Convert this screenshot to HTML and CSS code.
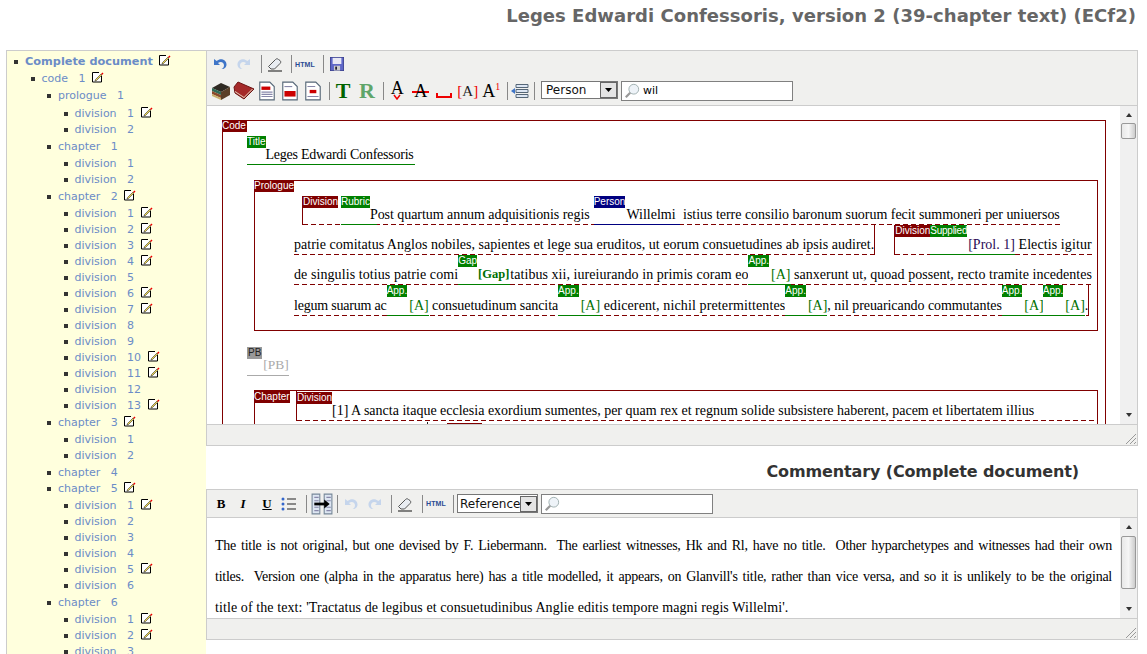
FILE: index.html
```html
<!DOCTYPE html>
<html lang="en">
<head>
<meta charset="utf-8">
<title>Leges Edwardi Confessoris</title>
<link rel="stylesheet" href="styles.css">
</head>
<body>
<svg class="defs" width="0" height="0" aria-hidden="true">
  <symbol id="edit" viewBox="0 0 12 12"><path d="M9.500 5v6H.5V1.500H7" fill="#fff" stroke="#000"/><path d="M3.500 8.500L9 3l1 1-5.500 5.500-1.500.5z" fill="#f0d850" stroke="#333" stroke-width=".6"/><path d="M9 3l1.500-1.500 1 1L10 4z" fill="#e00"/></symbol>
  <symbol id="undo" viewBox="0 0 16 16"><path d="M2 3v6h6L6 7c3-2 6-.5 6 2.500 0 1.500-1 3-2.500 3.500 3.500.5 5-2.500 5-4.500C14.500 4 9 1.500 4.700 5z" fill="#3f75c8"/></symbol>
  <symbol id="redo" viewBox="0 0 16 16"><path d="M14 3v6H8l2-2C7 5 4 6.500 4 9.500 4 11 5 12.500 6.500 13 3 13.500 1.500 10.500 1.500 8.500 1.500 4 7 1.500 11.300 5z" fill="#c5d5ec"/></symbol>
  <symbol id="undo-off" viewBox="0 0 16 16"><path d="M2 3v6h6L6 7c3-2 6-.5 6 2.500 0 1.500-1 3-2.500 3.500 3.500.5 5-2.500 5-4.500C14.500 4 9 1.500 4.700 5z" fill="#c5d5ec"/></symbol>
  <symbol id="eraser" viewBox="0 0 16 16"><path d="M1.500 10.500l7-7c1-1 2-1 3 0l1.500 1c1 1 1 2 0 3l-5.500 5.500H4z" fill="#e9edf2" stroke="#555"/><path d="M1 15h14" stroke="#111"/></symbol>
  <symbol id="save" viewBox="0 0 16 16"><rect x=".5" y=".5" width="15" height="15" fill="#5f67c8" stroke="#3a3f90"/><rect x="3" y="1" width="10" height="7" fill="#e8e8f4"/><rect x="4.500" y="10" width="7" height="5.500" fill="#ccc"/><rect x="6" y="11" width="2" height="3.500" fill="#223"/></symbol>
  <symbol id="books" viewBox="0 0 20 20"><path d="M1 7l9-5 9 4-9 5z" fill="#2f2a22"/><path d="M1 7l9 4v3L1 10z" fill="#2f6b55"/><path d="M1 10l9 4v3l-9-4z" fill="#8a4a2a"/><path d="M1 13l9 4v2l-9-4z" fill="#c9b06a"/><path d="M10 11l9-5v8l-9 5z" fill="#5b4028"/></symbol>
  <symbol id="book" viewBox="0 0 22 20"><path d="M1 6l4-5 16 7-10 10-9-6z" fill="#a52a2a" stroke="#6c1414"/><path d="M2 11l9 6 9-9-1 0-8 8-9-6z" fill="#e8d8c0"/></symbol>
  <symbol id="doc1" viewBox="0 0 16 18"><path d="M1.500 1h9l4 4v12h-13z" fill="#fff" stroke="#567"/><rect x="3" y="5" width="8" height="3" fill="#c00"/><path d="M3 10h10M3 12h10M3 14h10" stroke="#88a"/></symbol>
  <symbol id="doc2" viewBox="0 0 16 18"><path d="M1.500 1h9l4 4v12h-13z" fill="#fff" stroke="#567"/><path d="M3 5h7" stroke="#88a"/><rect x="3" y="9" width="10" height="5" fill="#c00"/></symbol>
  <symbol id="doc3" viewBox="0 0 16 18"><path d="M1.500 1h9l4 4v12h-13z" fill="#fff" stroke="#567"/><path d="M3 5h7M3 14h10" stroke="#88a"/><rect x="5" y="8" width="6" height="3" fill="#c00"/></symbol>
  <symbol id="listout" viewBox="0 0 18 16"><path d="M5 1.500h12v3H5zM5 6.500h12v3H5zM5 11.500h12v3H5z" fill="#dce6f4" stroke="#567"/><path d="M0 8l4-3v6z" fill="#3f75c8"/></symbol>
  <symbol id="bullets" viewBox="0 0 16 14"><circle cx="2" cy="2" r="1.500" fill="#36c"/><circle cx="2" cy="7" r="1.500" fill="#36c"/><circle cx="2" cy="12" r="1.500" fill="#36c"/><path d="M6 2h9M6 7h9M6 12h9" stroke="#222"/></symbol>
  <symbol id="docs" viewBox="0 0 20 20"><path d="M1 1h7v18H1zM12 1h7v18h-7z" fill="#dde6f2" stroke="#789"/><path d="M3 4h4M3 7h4M3 13h4M3 16h4M14 4h4M14 7h4M14 13h4M14 16h4" stroke="#88a"/><path d="M3 10h11" stroke="#000" stroke-width="2.500"/><path d="M12 6l5 4-5 4z" fill="#000"/></symbol>
  <symbol id="search" viewBox="0 0 18 18"><circle cx="11" cy="7" r="5.500" fill="#eef3f8" stroke="#9aa"/><path d="M7 11l-5 5" stroke="#999" stroke-width="2.500"/></symbol>
  <symbol id="arrow" viewBox="0 0 7 4"><path d="M0 0h7L3.500 4z" fill="#000"/></symbol>
  <symbol id="grip" viewBox="0 0 12 12"><path d="M11 1L1 11M11 5l-6 6M11 9l-2 2" stroke="#999"/></symbol>
  <symbol id="vmark" viewBox="0 0 8 6"><path d="M1 1l3 4 3-4" fill="none" stroke="#e00" stroke-width="1.500"/></symbol>
</svg>

<h1 class="page-title">Leges Edwardi Confessoris, version 2 (39-chapter text) (ECf2)</h1>

<div class="layout">
  <nav class="tree">
    <ul class="root">
      <li><a class="strong">Complete document</a> <svg class="ed"><use href="#edit"/></svg>
        <ul class="l1"><li><a>code&nbsp;&nbsp; 1</a> <svg class="ed"><use href="#edit"/></svg>
          <ul class="l2">
            <li><a>prologue&nbsp;&nbsp; 1</a>
              <ul class="l3">
                <li><a>division&nbsp;&nbsp; 1</a> <svg class="ed"><use href="#edit"/></svg></li>
                <li><a>division&nbsp;&nbsp; 2</a></li>
              </ul></li>
            <li><a>chapter&nbsp;&nbsp; 1</a>
              <ul class="l3">
                <li><a>division&nbsp;&nbsp; 1</a></li>
                <li><a>division&nbsp;&nbsp; 2</a></li>
              </ul></li>
            <li><a>chapter&nbsp;&nbsp; 2</a> <svg class="ed"><use href="#edit"/></svg>
              <ul class="l3">
                <li><a>division&nbsp;&nbsp; 1</a> <svg class="ed"><use href="#edit"/></svg></li>
                <li><a>division&nbsp;&nbsp; 2</a> <svg class="ed"><use href="#edit"/></svg></li>
                <li><a>division&nbsp;&nbsp; 3</a> <svg class="ed"><use href="#edit"/></svg></li>
                <li><a>division&nbsp;&nbsp; 4</a> <svg class="ed"><use href="#edit"/></svg></li>
                <li><a>division&nbsp;&nbsp; 5</a></li>
                <li><a>division&nbsp;&nbsp; 6</a> <svg class="ed"><use href="#edit"/></svg></li>
                <li><a>division&nbsp;&nbsp; 7</a> <svg class="ed"><use href="#edit"/></svg></li>
                <li><a>division&nbsp;&nbsp; 8</a></li>
                <li><a>division&nbsp;&nbsp; 9</a></li>
                <li><a>division&nbsp;&nbsp; 10</a> <svg class="ed"><use href="#edit"/></svg></li>
                <li><a>division&nbsp;&nbsp; 11</a> <svg class="ed"><use href="#edit"/></svg></li>
                <li><a>division&nbsp;&nbsp; 12</a></li>
                <li><a>division&nbsp;&nbsp; 13</a> <svg class="ed"><use href="#edit"/></svg></li>
              </ul></li>
            <li><a>chapter&nbsp;&nbsp; 3</a> <svg class="ed"><use href="#edit"/></svg>
              <ul class="l3">
                <li><a>division&nbsp;&nbsp; 1</a></li>
                <li><a>division&nbsp;&nbsp; 2</a></li>
              </ul></li>
            <li><a>chapter&nbsp;&nbsp; 4</a></li>
            <li><a>chapter&nbsp;&nbsp; 5</a> <svg class="ed"><use href="#edit"/></svg>
              <ul class="l3">
                <li><a>division&nbsp;&nbsp; 1</a> <svg class="ed"><use href="#edit"/></svg></li>
                <li><a>division&nbsp;&nbsp; 2</a></li>
                <li><a>division&nbsp;&nbsp; 3</a></li>
                <li><a>division&nbsp;&nbsp; 4</a></li>
                <li><a>division&nbsp;&nbsp; 5</a> <svg class="ed"><use href="#edit"/></svg></li>
                <li><a>division&nbsp;&nbsp; 6</a></li>
              </ul></li>
            <li><a>chapter&nbsp;&nbsp; 6</a>
              <ul class="l3">
                <li><a>division&nbsp;&nbsp; 1</a> <svg class="ed"><use href="#edit"/></svg></li>
                <li><a>division&nbsp;&nbsp; 2</a> <svg class="ed"><use href="#edit"/></svg></li>
                <li><a>division&nbsp;&nbsp; 3</a></li>
              </ul></li>
          </ul></li></ul>
      </li>
    </ul>
  </nav>

  <main class="workspace">
    <section class="editor editor-main">
      <div class="toolbar">
        <div class="tb-row tb-first">
          <span class="slot w22"><svg class="ic"><use href="#undo"/></svg></span>
          <span class="slot w26"><svg class="ic"><use href="#redo"/></svg></span>
          <i class="sep"></i>
          <span class="slot w20 mr2"><svg class="ic"><use href="#eraser"/></svg></span>
          <i class="sep"></i>
          <span class="slot w20 mr4"><span class="html">HTML</span></span>
          <i class="sep"></i>
          <span class="slot w20"><svg class="ic save"><use href="#save"/></svg></span>
        </div>
        <div class="tb-row tb-second">
          <span class="slot w23"><svg class="ic big"><use href="#books"/></svg></span>
          <span class="slot w23"><svg class="ic big"><use href="#book"/></svg></span>
          <span class="slot w23"><svg class="ic doc"><use href="#doc1"/></svg></span>
          <span class="slot w23"><svg class="ic doc"><use href="#doc2"/></svg></span>
          <span class="slot w23"><svg class="ic doc"><use href="#doc3"/></svg></span>
          <i class="sep"></i>
          <span class="slot w23 mr1"><span class="glyph gt">T</span></span>
          <span class="slot w23"><span class="glyph gr">R</span></span>
          <i class="sep"></i>
          <span class="slot w235"><span class="glyph ga raised">A<svg class="vmark"><use href="#vmark"/></svg></span></span>
          <span class="slot w235"><span class="glyph ga strike">A</span></span>
          <span class="slot w235"><span class="gap-mark"></span></span>
          <span class="slot w235"><span class="glyph gb"><b>[</b>A<b>]</b></span></span>
          <span class="slot w235"><span class="glyph ga">A<sup>1</sup></span></span>
          <i class="sep"></i>
          <span class="slot w20"><svg class="ic list"><use href="#listout"/></svg></span>
          <i class="sep"></i>
          <div class="select sel-person"><span>Person</span><span class="sel-btn"><svg class="arr"><use href="#arrow"/></svg></span></div>
          <div class="searchbox"><svg class="mag"><use href="#search"/></svg><span>wil</span></div>
        </div>
      </div>
      <div class="pane pane-main">
        <div class="doc-view">
          <div class="box code">
            <b class="tag red">Code</b>
            <div class="title-el"><b class="tag green">Title</b><span class="title-text">Leges Edwardi Confessoris</span></div>
            <div class="box prologue">
              <b class="tag red">Prologue</b>
              <div class="ln r1">
                <div class="part open">
                  <b class="tag red">Division</b>
                  <div class="el el-green gap3"><b class="tag green">Rubric</b><i class="pad7"></i></div>
                  <span class="t back7 s1a">Post quartum annum adquisitionis regis</span>
                  <div class="el el-blue gap4"><b class="tag blue">Person</b><span class="t pr4">Willelmi</span></div>
                  <span class="t s1c"> istius terre consilio baronum suorum fecit summoneri per uniuersos</span>
                </div>
              </div>
              <div class="ln r2">
                <div class="part close">
                  <span class="t s2a">patrie comitatus Anglos nobiles, sapientes et lege sua eruditos, ut eorum consuetudines ab ipsis audiret.</span>
                </div>
                <div class="part open second">
                  <b class="tag red">Division</b>
                  <div class="el el-green"><b class="tag green narrow">Supplied</b><span class="t purple">[Prol. 1]</span></div>
                  <span class="t s2c"> Electis igitur</span>
                </div>
              </div>
              <div class="ln r3">
                <div class="part">
                  <span class="t s3a">de singulis totius patrie comi</span>
                  <div class="el el-green"><b class="tag green">Gap</b><span class="t gr-t bold">[Gap]</span></div>
                  <span class="t s3b">tatibus xii, iureiurando in primis coram eo</span>
                  <div class="el el-green"><b class="tag green">App.</b><span class="t gr-t">[A]</span></div>
                  <span class="t s3c"> sanxerunt ut, quoad possent, recto tramite incedentes</span>
                </div>
              </div>
              <div class="ln r4">
                <div class="part close">
                  <span class="t s4a">legum suarum ac</span>
                  <div class="el el-green"><b class="tag green">App.</b><span class="t gr-t">[A]</span></div>
                  <span class="t s4b"> consuetudinum sancita</span>
                  <div class="el el-green"><b class="tag green">App.</b><span class="t gr-t">[A]</span></div>
                  <span class="t s4c"> edicerent, nichil pretermittentes</span>
                  <div class="el el-green"><b class="tag green">App.</b><span class="t gr-t">[A]</span></div>
                  <span class="t s4d">, nil preuaricando commutantes</span>
                  <div class="el el-green"><b class="tag green">App.</b><span class="t gr-t">[A]</span></div>
                  <div class="el el-green back1"><b class="tag green">App.</b><span class="t gr-t">[A]</span></div>
                  <span class="t">.</span>
                </div>
              </div>
            </div>
            <div class="pb-el"><b class="tag grey">PB</b><span class="pb-text">[PB]</span></div>
            <div class="box chapter">
              <b class="tag red">Chapter</b>
              <div class="ch-line">
                <div class="part open">
                  <b class="tag red tag-low">Division</b>
                  <span class="t">[1] A sancta itaque ecclesia exordium sumentes, per quam rex et regnum solide subsistere haberent, pacem et libertatem illius</span>
                </div>
              </div>
              <div class="ch-next"><i class="tick"></i><i class="dash-next"></i></div>
            </div>
          </div>
        </div>
        <div class="scrollbar">
          <span class="sb-up"></span>
          <span class="thumb thumb-main"></span>
          <span class="sb-down"></span>
        </div>
      </div>
      <div class="statusbar"><svg class="grip"><use href="#grip"/></svg></div>
    </section>

    <h2 class="comm-title">Commentary (Complete document)</h2>

    <section class="editor editor-comm">
      <div class="toolbar">
        <div class="tb-row tb-comm">
          <span class="slot w22 fmt b">B</span>
          <span class="slot w22 fmt i">I</span>
          <span class="slot w22 ml2 fmt u">U</span>
          <span class="slot w22"><svg class="ic"><use href="#bullets"/></svg></span>
          <i class="sep first"></i>
          <span class="slot w22"><svg class="ic docs"><use href="#docs"/></svg></span>
          <i class="sep"></i>
          <span class="slot w18"><svg class="ic"><use href="#undo-off"/></svg></span>
          <span class="slot w24 ml3"><svg class="ic"><use href="#redo"/></svg></span>
          <i class="sep"></i>
          <span class="slot w18 mr4"><svg class="ic"><use href="#eraser"/></svg></span>
          <i class="sep"></i>
          <span class="slot w18 mr4"><span class="html">HTML</span></span>
          <i class="sep"></i>
          <div class="select sel-ref"><span>Reference</span><span class="sel-btn"><svg class="arr"><use href="#arrow"/></svg></span></div>
          <div class="searchbox"><svg class="mag"><use href="#search"/></svg></div>
        </div>
      </div>
      <div class="pane pane-comm">
        <div class="comm-text">
          <p class="just">The title is not original, but one devised by F. Liebermann.&nbsp; The earliest witnesses, Hk and Rl, have no title.&nbsp; Other hyparchetypes and witnesses had their own</p>
          <p class="just">titles.&nbsp; Version one (alpha in the apparatus here) has a title modelled, it appears, on Glanvill's title, rather than vice versa, and so it is unlikely to be the original</p>
          <p class="last">title of the text: 'Tractatus de legibus et consuetudinibus Anglie editis tempore magni regis Willelmi'.</p>
        </div>
        <div class="scrollbar">
          <span class="sb-up"></span>
          <span class="thumb thumb-comm"></span>
          <span class="sb-down"></span>
        </div>
      </div>
      <div class="statusbar"><svg class="grip"><use href="#grip"/></svg></div>
    </section>
  </main>
</div>
</body>
</html>
```

FILE: styles.css
```css
* { box-sizing: border-box; }
html, body { margin: 0; padding: 0; height: 654px; overflow: hidden; background: #fff; }
body { font-family: "DejaVu Sans", sans-serif; }
.defs { position: absolute; }
i, b { font-style: normal; }

.page-title { margin: 0; height: 50px; padding: 5px 11px 0 0; text-align: right; font-size: 18px; letter-spacing: .03px; line-height: 22px; color: #666; font-weight: bold; }

.layout { display: flex; padding-left: 6px; height: 604px; }

/* tree */
.tree { flex: 0 0 200px; height: 604px; overflow: hidden; background: #ffffdd; border: 1px solid #ccc; border-width: 1px 0 0 1px; padding-top: 3px; }
.tree ul { margin: 1px 0; padding: 0 0 0 16.500px; list-style: none; }
.tree .root { margin: 0; padding-left: 18px; }
.tree .l2 > li:first-child > ul { margin-top: 2px; }
.tree li { position: relative; line-height: 16px; font-size: 11px; white-space: nowrap; }
.tree li::before { content: ""; position: absolute; left: -11px; top: 6px; width: 4px; height: 4px; background: #333; }
.tree a { color: #6b8cc7; font-size: 11px; }
.tree .strong { font-weight: bold; font-size: 11.300px; }
.ed { width: 12px; height: 12px; vertical-align: -1px; margin-left: 3px; }

/* editors */
.workspace { flex: 0 0 932px; }
.editor { border: 1px solid #ccc; }
.toolbar { background: #f0f0ee; border-bottom: 1px solid #ccc; }
.tb-row { display: flex; align-items: center; }
.editor-main .toolbar { height: 55px; padding-top: 2px; }
.tb-first { height: 22px; padding-left: 2px; }
.tb-second { height: 29px; padding: 2px 0 0 2.500px; }
.tb-comm { height: 27px; padding-left: 3px; }
.sep { flex: none; width: 1px; height: 18px; background: #888; margin: 0 3px 0 4px; }
.tb-second .sep { margin: 0 2px 0 4px; }
.tb-comm .sep { margin: 0 4px; }
.tb-comm .sep.first { margin-left: 6px; }
.slot { flex: none; display: flex; align-items: center; justify-content: center; height: 100%; }
.w18 { width: 18px; }
.w20 { width: 20px; }
.w22 { width: 22px; }
.w23 { width: 23px; }
.w235 { width: 23.500px; }
.w24 { width: 24px; }
.w26 { width: 26px; }
.mr1 { margin-right: 1px; }
.mr2 { margin-right: 2px; }
.mr4 { margin-right: 4px; }
.ml2 { margin-left: 2px; }
.ml3 { margin-left: 3px; }
.ic { width: 16px; height: 16px; flex: none; }
.save { width: 14px; height: 14px; }
.big { width: 22px; height: 20px; }
.doc { width: 18px; height: 20px; }
.list { width: 18px; height: 16px; }
.docs { width: 22px; height: 24px; }
.html { font: bold 7px "Liberation Sans", sans-serif; color: #2b4b93; letter-spacing: .1px; }
.glyph { font-family: "Liberation Serif", serif; line-height: 20px; text-align: center; flex: none; position: relative; }
.gt { color: #006400; font-weight: bold; font-size: 22px; }
.gr { color: #5fa56a; font-weight: bold; font-size: 22px; }
.ga { color: #000; font-size: 18px; }
.raised { line-height: 14px; margin-top: -6px; }
.ga sup { color: #e00; font-size: 10px; line-height: 0; }
.vmark { position: absolute; left: 2.500px; top: 13px; width: 8px; height: 6px; }
.strike { background: linear-gradient(#e00, #e00) center 10px / 100% 2px no-repeat; padding: 0 2px; }
.gap-mark { width: 16px; height: 5px; margin-top: 10px; border: 2px solid #e00; border-top: 0; }
.gb { font-size: 15px; color: #222; }
.gb b { color: #e00; font-weight: normal; }

.select { flex: none; display: flex; align-items: center; justify-content: space-between; background: #fff; border: 1px solid #777; font-size: 12px; line-height: 16px; color: #111; }
.sel-person { width: 77px; height: 18px; margin: -2px 0 0 4px; padding-left: 4px; }
.sel-ref { width: 81px; height: 19px; margin-left: -1px; padding-left: 2px; }
.sel-btn { display: flex; align-items: center; justify-content: center; width: 17px; height: 16px; background: #e4e4e4; border: 1px solid #666; }
.arr { width: 7px; height: 4px; }
.searchbox { flex: none; display: flex; align-items: center; gap: 3px; width: 172px; height: 20px; margin-left: 3px; background: #fff; border: 1px solid #808080; font-size: 11px; padding-left: 2px; }
.mag { width: 16px; height: 16px; }

.pane { display: flex; background: #fff; }
.pane-main { height: 318px; }
.pane-comm { height: 100px; }
.doc-view { flex: 1; min-width: 0; overflow: hidden; padding: 14px 0 0 15px; }
.scrollbar { flex: 0 0 17px; position: relative; background: #f0f0f0; display: flex; flex-direction: column; justify-content: space-between; align-items: center; padding: 7px 0; }
.sb-up, .sb-down { width: 0; height: 0; border: 3.500px solid transparent; }
.sb-up { border-bottom: 4px solid #333; border-top: 0; }
.sb-down { border-top: 4px solid #333; border-bottom: 0; }
.thumb { position: absolute; left: 1px; width: 15px; background: linear-gradient(90deg, #e8e8e8, #f6f6f6 50%, #ccc); border: 1px solid #999; border-radius: 2px; }
.thumb-main { top: 17px; height: 16px; }
.thumb-comm { top: 18px; height: 53px; }
.statusbar { height: 21px; background: #f0f0ee; border-top: 1px solid #ccc; display: flex; justify-content: flex-end; align-items: flex-end; }
.grip { width: 12px; height: 12px; }

/* document markup */
.box { border: 1px solid #800000; }
.tag { display: block; flex: none; align-self: flex-start; height: 12px; font: normal 10px/12px "Liberation Sans", sans-serif; color: #fff; white-space: nowrap; }
.red { background: #800000; }
.green { background: #008000; }
.blue { background: #000080; }
.grey { background: #999; color: #222; padding: 0 1px; }
.narrow { letter-spacing: -.25px; }
.code { width: 884px; height: 400px; }
.code > .tag, .prologue > .tag { width: max-content; margin-top: -1px; }
.code > .tag { margin-left: -1px; padding-right: 1px; }
.prologue > .tag { margin-left: -40px; }
.chapter > .tag { width: max-content; margin-left: -42px; }

.title-el { display: flex; width: 168px; height: 29px; margin: 4px 0 0 24px; border-bottom: 1px solid #008000; }
.title-text { align-self: flex-end; font: 14px/18px "Liberation Serif", serif; letter-spacing: -.24px; white-space: pre; }

.prologue { width: 844px; height: 151px; margin: 15px 0 0 31px; padding-left: 39px; }
.ln { display: flex; height: 30px; white-space: nowrap; }
.r1 { margin-top: 4px; height: 29px; padding-left: 8px; }
.r4 { height: 31px; }

.part { display: flex; height: 100%; background: repeating-linear-gradient(90deg, #800000 0 5px, transparent 5px 8px) left bottom / 100% 1px no-repeat; }
.part.open { border-left: 1px solid #800000; }
.part.close { border-right: 1px solid #800000; }
.part.second { margin-left: 19px; }
.el { display: flex; flex: none; background: #fff; }
.el-green { border-bottom: 1px solid #008000; }
.el-blue { border-bottom: 1px solid #000080; }
.gap3 { margin-left: 3px; }
.gap4 { margin-left: 4px; }
.back1 { margin-left: -1px; }
.pad7 { width: 7px; }
.back7 { margin-left: -7px; }
.t { align-self: flex-end; flex: none; font: 14px/21px "Liberation Serif", serif; color: #000; white-space: pre; }
.el .t { padding-left: 1px; margin-bottom: -1px; }
.el .pr4 { padding-right: 4px; }
.purple { color: #2a0a55; }
.el .gr-t { color: #007000; font-size: 14px; padding: 0 0 0 2px; }
.el .bold { font-size: 12.500px; font-weight: bold; padding: 0 1px; }
.s1a { letter-spacing: -.05px; }
.s1c { letter-spacing: -.03px; }
.s2a { letter-spacing: .02px; }
.s2c { letter-spacing: .1px; }
.s3a { letter-spacing: .08px; }
.s3b { letter-spacing: .05px; }
.s3c { letter-spacing: .03px; }
.s4a { letter-spacing: -.2px; }
.s4b { letter-spacing: -.09px; }
.s4c { letter-spacing: .12px; }
.s4d { letter-spacing: -.07px; }

.pb-el { display: flex; width: 42px; height: 29px; margin: 16px 0 0 24px; border-bottom: 1px solid #aaa; }
.pb-text { align-self: flex-end; font: 13.500px/20px "Liberation Serif", serif; color: #aaa; padding-left: 1px; }

.chapter { width: 844px; height: 100px; margin: 14px 0 0 31px; padding-left: 41px; }
.ch-line { height: 30px; margin-top: -12px; }
.tag-low { margin-top: 1px; }
.ch-next { display: flex; padding-left: 131px; gap: 19px; }
.tick { width: 1px; height: 3px; background: #222; margin-top: 1px; }
.dash-next { width: 35px; height: 1px; margin-top: 2px; background: #800000; }

.comm-title { margin: 0; height: 43px; padding: 15px 59px 0 0; text-align: right; font-size: 16px; letter-spacing: -.13px; line-height: 22px; color: #333; }
.comm-text { flex: 1; min-width: 0; overflow: hidden; padding: 12px 8px 0 8px; font: 14px/31px "Liberation Serif", serif; letter-spacing: .09px; }
.comm-text p { margin: 0; white-space: nowrap; }
.comm-text .just { text-align: justify; text-align-last: justify; white-space: normal; letter-spacing: -.25px; }

.fmt { font: bold 13px "Liberation Serif", serif; }
.fmt.i { font-style: italic; }
.fmt.u { text-decoration: underline; }
```
